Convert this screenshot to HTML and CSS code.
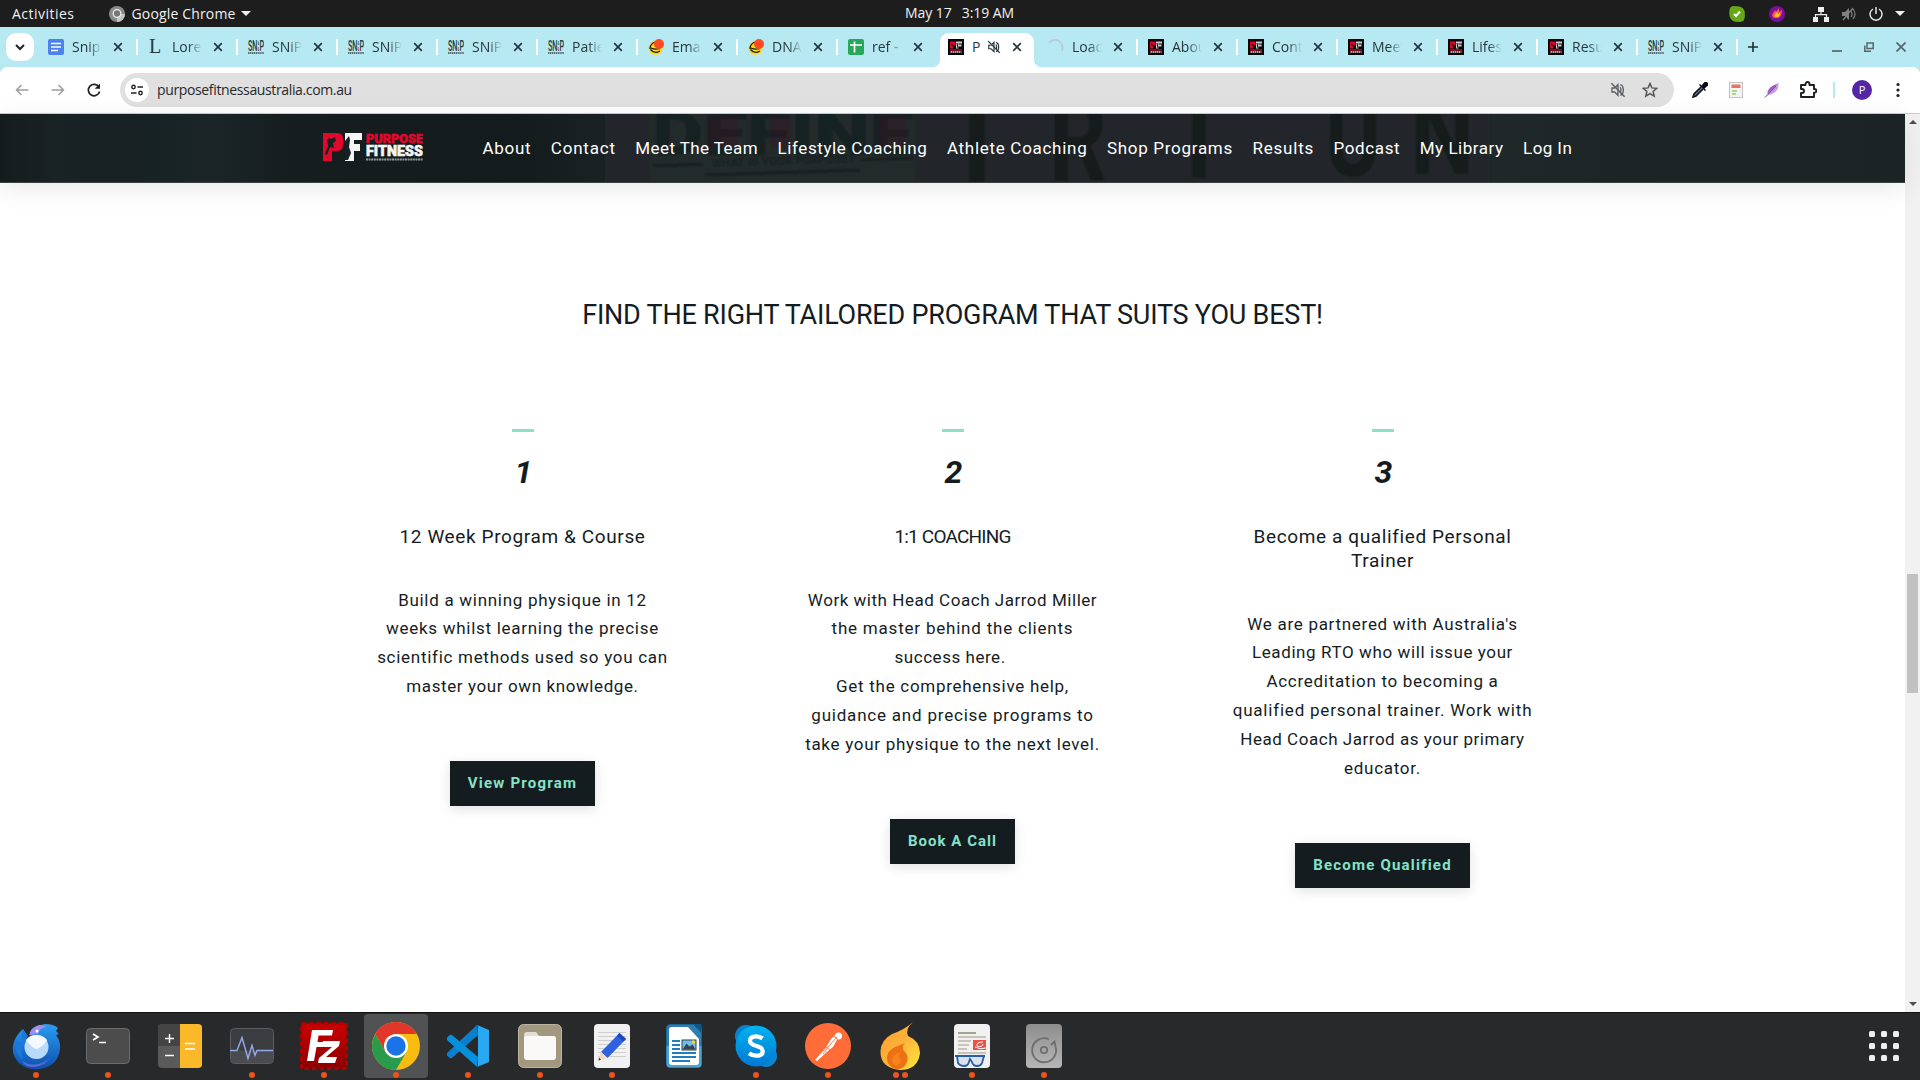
FILE: index.html
```html
<!DOCTYPE html>
<html lang="en">
<head>
<meta charset="utf-8">
<title>Purpose Fitness</title>
<link rel="stylesheet" href="styles.css">
</head>
<body>
<svg class="defs" width="0" height="0">
  <symbol id="close" viewBox="0 0 10 10"><path d="M1.2 1.2 8.8 8.8M8.8 1.2 1.2 8.8" stroke="currentColor" stroke-width="1.7" fill="none"/></symbol>
  <symbol id="snip" viewBox="0 0 16 16"><text x="0" y="11.5" font-family="Roboto" font-weight="500" font-size="14" textLength="16" lengthAdjust="spacingAndGlyphs" fill="#25383b">SN:P</text><path d="M10.3 2v3" stroke="#35b58b" stroke-width="1.2"/><path d="M10.3 8v3" stroke="#e2674a" stroke-width="1.2"/><path d="M0 14h16" stroke="#5c7175" stroke-width="1.8" stroke-dasharray="1.4 .5"/></symbol>
  <symbol id="pf" viewBox="0 0 16 16"><path d="M0 0h16v16H0z" fill="#050505"/><path d="M2 2.500h5.500v4H5v3H2z" fill="#d4082d"/><path d="M8 2.500h6v2h-3.500v1h3v2h-3v2H8z" fill="#ccc"/><path d="M3 5l3 2M9 4l1 5" stroke="#050505"/><path d="M2 11h12" stroke="#c8102e" stroke-width="1.3"/><path d="M2.500 13h11" stroke="#ddd" stroke-width="1.5" stroke-dasharray="1.500 .5"/></symbol>
  <symbol id="mail" viewBox="0 0 16 16"><circle cx="7.500" cy="9" r="7" fill="#ffd91c"/><path d="M2 10q0-5 5-7M2.500 10.500q4 5 9.500 1.500M3 9q4 2 9 .5" stroke="#1c1c1c" stroke-width="1.300" fill="none"/><circle cx="11" cy="5" r="5" fill="#ff4b1f"/></symbol>
  <symbol id="mute" viewBox="0 0 24 24"><path d="M3 9h4l5-5v16l-5-5H3zM15 8c2 2 2 6 0 8M15.500 4c6 2 6 14 0 16" fill="none" stroke="currentColor" stroke-width="2"/><path d="M2 2l20 20" stroke="currentColor" stroke-width="2.200"/></symbol>
</svg>

<header class="topbar">
  <span class="activities">Activities</span>
  <svg class="chrome-mono" viewBox="0 0 16 16"><circle cx="8" cy="8" r="8" fill="#8b8b8b"/><path d="M8 8h8a8 8 0 0 1-8 8z" fill="#c5c5c5"/><circle cx="8" cy="7.500" r="3.800" fill="#777" stroke="#eee" stroke-width="1.300"/></svg>
  <span class="appname">Google Chrome</span><i class="tri"></i>
  <div class="clock"><span>May 17</span><span>3:19 AM</span></div>
  <div class="tray">
    <svg class="skype-tray" width="16" height="16" viewBox="0 0 16 16"><path d="M4.500 0Q7 .2 9 .3 16 1 15.800 8q.8 8-5 8Q6 16 4 15 0 12 .3 7 0 0 4.500 0" fill="#64a815"/><path d="M5 8l2 2 4-4.500" stroke="#fff" stroke-width="2" fill="none"/></svg>
    <svg class="flame-tray" width="16" height="16" viewBox="0 0 16 16"><circle cx="8" cy="8" r="8" fill="#7b0fa0"/><path d="M3 9l3-5 1 2 3-4v4l3-2c0 5-2 8-5 8S4 12 3 9" fill="#ff5a36"/><path d="M5 10l3-4 1 2 2-1c0 3-1 4-3 4s-2-.5-3-1" fill="#ffc62e"/></svg>
    <svg class="net" width="16" height="16" viewBox="0 0 16 16"><path d="M5 1h6v5H5zM0 11h5v5H0zM11 11h5v5h-5z" fill="#eee"/><path d="M8 6v3M2.500 11V8.700h11V11" stroke="#eee" stroke-width="1.200" fill="none"/></svg>
    <svg class="vol" width="16" height="16" viewBox="0 0 16 16"><path d="M1 6h3l4-4v12l-4-4H1z" fill="#808080"/><path d="M10 5q2 3 0 6M12 3q4 5 0 10M2 14L12 2" stroke="#808080" fill="none" stroke-width="1.200"/></svg>
    <svg class="pow" width="14" height="16" viewBox="0 0 14 16"><path d="M4 3a6 6 0 1 0 6 0M7 1v7" stroke="#eee" stroke-width="1.400" fill="none"/></svg>
    <i class="tri"></i>
  </div>
</header>

<nav class="tabstrip">
  <button class="tabsearch"><svg width="10" height="7" viewBox="0 0 10 7"><path d="M1 1l4 4 4-4" stroke="#1f2426" stroke-width="2" fill="none"/></svg></button>
  <div class="tab"><svg class="fav" viewBox="0 0 16 16"><rect width="16" height="16" rx="2" fill="#4b82ee"/><path d="M3 4.500h10M3 8h10M3 11.500h7" stroke="#fff" stroke-width="1.500"/></svg><span>Snip</span><svg class="x"><use href="#close"/></svg></div>
  <div class="tab"><svg class="fav" viewBox="0 0 16 16"><text x="1" y="14" font-family="Liberation Serif" font-size="20" fill="#263b3f">L</text></svg><span>Lore</span><svg class="x"><use href="#close"/></svg></div>
  <div class="tab"><svg class="fav"><use href="#snip"/></svg><span>SNiP</span><svg class="x"><use href="#close"/></svg></div>
  <div class="tab"><svg class="fav"><use href="#snip"/></svg><span>SNiP</span><svg class="x"><use href="#close"/></svg></div>
  <div class="tab"><svg class="fav"><use href="#snip"/></svg><span>SNiP</span><svg class="x"><use href="#close"/></svg></div>
  <div class="tab"><svg class="fav"><use href="#snip"/></svg><span>Patie</span><svg class="x"><use href="#close"/></svg></div>
  <div class="tab"><svg class="fav"><use href="#mail"/></svg><span>Ema</span><svg class="x"><use href="#close"/></svg></div>
  <div class="tab"><svg class="fav"><use href="#mail"/></svg><span>DNA</span><svg class="x"><use href="#close"/></svg></div>
  <div class="tab nosep"><svg class="fav" viewBox="0 0 16 16"><rect width="16" height="16" rx="2" fill="#28a75b"/><path d="M2 6h12M6.500 2.500v11" stroke="#fff" stroke-width="1.700"/></svg><span>ref -</span><svg class="x"><use href="#close"/></svg></div>
  <div class="tab active nosep"><svg class="fav"><use href="#pf"/></svg><span class="short">P</span><svg class="tabmute"><use href="#mute"/></svg><svg class="x"><use href="#close"/></svg></div>
  <div class="tab"><svg class="fav" viewBox="0 0 16 16"><path d="M1 4q6-6 11-1 4 4 2 9" fill="none" stroke="#b3ccd1" stroke-width="1.600"/></svg><span>Load</span><svg class="x"><use href="#close"/></svg></div>
  <div class="tab"><svg class="fav"><use href="#pf"/></svg><span>Abou</span><svg class="x"><use href="#close"/></svg></div>
  <div class="tab"><svg class="fav"><use href="#pf"/></svg><span>Cont</span><svg class="x"><use href="#close"/></svg></div>
  <div class="tab"><svg class="fav"><use href="#pf"/></svg><span>Meet</span><svg class="x"><use href="#close"/></svg></div>
  <div class="tab"><svg class="fav"><use href="#pf"/></svg><span>Lifes</span><svg class="x"><use href="#close"/></svg></div>
  <div class="tab"><svg class="fav"><use href="#pf"/></svg><span>Resu</span><svg class="x"><use href="#close"/></svg></div>
  <div class="tab"><svg class="fav"><use href="#snip"/></svg><span>SNiP</span><svg class="x"><use href="#close"/></svg></div>
  <svg class="newtab" width="10" height="10" viewBox="0 0 10 10"><path d="M5 0v10M0 5h10" stroke="#1f2c30" stroke-width="1.600"/></svg>
  <div class="winctl">
    <svg width="10" height="10" viewBox="0 0 10 10"><path d="M0 9h10" stroke="#59656a" stroke-width="1.700"/></svg>
    <svg width="10" height="10" viewBox="0 0 10 10"><path d="M3 1h6.200v5.500H3zM.8 3.500V9.200H7" stroke="#59656a" stroke-width="1.500" fill="none"/></svg>
    <svg width="10" height="10" viewBox="0 0 10 10"><path d="M.5.500l9 9M9.500.500l-9 9" stroke="#59656a" stroke-width="1.700"/></svg>
  </div>
</nav>

<div class="toolbar">
  <svg width="14" height="12" viewBox="0 0 14 12"><path d="M13.500 6H1.500M6.500 1l-5 5 5 5" stroke="#9b9d9f" stroke-width="1.500" fill="none"/></svg>
  <svg class="fwd" width="14" height="12" viewBox="0 0 14 12"><path d="M.5 6h12M7.500 1l5 5-5 5" stroke="#9b9d9f" stroke-width="1.500" fill="none"/></svg>
  <svg class="reload" width="14" height="14" viewBox="0 0 14 14"><path d="M12 4.200A5.700 5.700 0 1 0 12.600 8.500" stroke="#1d2022" stroke-width="1.700" fill="none"/><path d="M13 .5v5.300H7.700z" fill="#1d2022"/></svg>
  <div class="omnibox">
    <span class="site"><svg width="12" height="12" viewBox="0 0 12 12"><path d="M6.500 3H12M0 9h5.500" stroke="#222" stroke-width="1.600"/><circle cx="2.500" cy="3" r="1.700" fill="none" stroke="#222" stroke-width="1.400"/><circle cx="9.500" cy="9" r="1.700" fill="none" stroke="#222" stroke-width="1.400"/></svg></span>
    <span class="url">purposefitnessaustralia.com.au</span>
    <svg class="omute"><use href="#mute"/></svg>
    <svg class="star" width="16" height="16" viewBox="0 0 16 16"><path d="M8 1.500l1.900 4.400 4.800.4-3.600 3.200 1.100 4.700L8 11.700l-4.200 2.500 1.100-4.700L1.300 6.300l4.800-.4z" fill="none" stroke="#55585a" stroke-width="1.500"/></svg>
  </div>
  <div class="exts">
    <svg width="16" height="16" viewBox="0 0 16 16"><path d="M9 5L2 12l-1 3 3-1 7-7" fill="#5c6fd0" stroke="#111" stroke-width="1.600"/><path d="M7 3l6 6 1-1-1.500-1.500L15.500 4a2 2 0 0 0-3.500-3.500L9.500 3.500 8 2z" fill="#0b0b12"/></svg>
    <svg width="16" height="16" viewBox="0 0 16 16"><rect x="1.500" y=".5" width="13" height="15" fill="#f3f3f3" stroke="#c3c3c3"/><path d="M3.500 2.500h9V6h-9z" fill="#ee7168"/><path d="M4 9h5M4 12h4" stroke="#96ce6a" stroke-width="1.500"/></svg>
    <svg width="16" height="16" viewBox="0 0 16 16"><path d="M1 15L14.500 1Q15 8 10 11q-3 2-7 2" fill="#c69be6"/><path d="M3.500 12Q2 6 14.500 1" fill="#9b57cb"/><path d="M1 15.500L12 4" stroke="#6e3b95" stroke-width="1"/></svg>
    <svg width="18" height="18" viewBox="0 0 18 18"><path d="M2 4h4.500V3a2 2 0 0 1 4 0v1H15v4h.5a1.800 1.800 0 0 1 0 3.600H15V16H2v-4h1a1.700 1.700 0 0 0 0-4H2z" fill="none" stroke="#1d2022" stroke-width="1.900" stroke-linejoin="round"/></svg>
    <i class="vline"></i>
    <span class="avatar">P</span>
    <svg width="4" height="16" viewBox="0 0 4 16"><g fill="#1d2022"><circle cx="2" cy="2.500" r="1.600"/><circle cx="2" cy="8" r="1.600"/><circle cx="2" cy="13.500" r="1.600"/></g></svg>
  </div>
</div>

<div class="viewport">
  <div class="page">
    <header class="sitehead">
      <svg class="backdrop" width="1905" height="68" viewBox="0 0 1905 68">
        <defs><filter id="soft"><feGaussianBlur stdDeviation="1"/></filter></defs>
        <g filter="url(#soft)">
          <path d="M605 -5h885v80H605z" fill="#20282a"/>
          <path d="M650 -5h265v80H650z" fill="#22292b"/>
          <text x="652" y="41" font-family="Roboto" font-weight="900" font-size="62" fill="#192022" textLength="262" lengthAdjust="spacingAndGlyphs">DEFINE</text>
          <path d="M708 2h30v32h-30zM770 2h20v32h-20zM878 2h28v32h-28z" fill="#3a1b22" opacity=".35"/>
          <path d="M653 52l50-2M705 61l155-5M861 46l52-2" stroke="#12191b" stroke-width="2"/>
          <text x="712" y="53" transform="rotate(-2 712 53)" font-family="Roboto" font-size="11" textLength="142" fill="#161d1f">WHAT IS YOUR PURPOSE?</text>
          <path d="M969-5h16v80h-16zM1192-5h14v69h-14z" fill="#151d1f"/>
          <g font-family="Roboto" font-weight="700" font-size="116" fill="#151d1f">
            <text x="1049" y="67" textLength="58" lengthAdjust="spacingAndGlyphs">R</text>
            <text x="1325" y="62" textLength="56" lengthAdjust="spacingAndGlyphs">U</text>
            <text x="1410" y="60" textLength="64" lengthAdjust="spacingAndGlyphs">N</text>
          </g>
        </g>
      </svg>
      <svg class="logo" width="100" height="28" viewBox="0 0 100 28">
        <path d="M0 0h14q6 0 6 6v6q0 6-6 6h-5v10H0z" fill="#e0082d"/>
        <path d="M22 0h17v7H31v4h6v7h-6v10h-9z" fill="#f4f4f4"/>
        <path d="M4 7q2-3 4-1l4-2 1 4-3 2 1 5-4-1-3 8-2-1 3-8zM22 8l4-5 1 4-1 7 2 6-3 7h-3z" fill="#172022"/>
        <text x="43" y="10" font-family="Roboto" font-weight="900" font-size="13" textLength="57" lengthAdjust="spacingAndGlyphs" fill="#e0082d" stroke="#e0082d" stroke-width=".6">PURPOSE</text>
        <text x="43" y="22.500" font-family="Roboto" font-weight="900" font-size="14.500" textLength="57" lengthAdjust="spacingAndGlyphs" fill="#f4f4f4" stroke="#f4f4f4" stroke-width=".6">FITNESS</text>
        <path d="M43 26.500h57" stroke="#8f9798" stroke-width="1.800" stroke-dasharray="2 .6"/>
      </svg>
      <nav class="menu">
        <a class="ls7">About</a><a class="ls8">Contact</a><a class="ls4">Meet The Team</a><a class="ls6">Lifestyle Coaching</a><a class="ls7">Athlete Coaching</a><a class="ls7">Shop Programs</a><a class="ls8">Results</a><a class="ls6">Podcast</a><a class="ls5">My Library</a><a class="ls4">Log In</a>
      </nav>
    </header>
    <main>
      <h1>FIND THE RIGHT TAILORED PROGRAM THAT SUITS YOU BEST!</h1>
      <div class="programs">
        <section>
          <i class="dash"></i><b class="num">1</b>
          <h2>12 Week Program &amp; Course</h2>
          <p><span class="ls7">Build a winning physique in 12</span><span class="ls7">weeks whilst learning the precise</span><span class="ls7">scientific methods used so you can</span><span class="ls6">master your own knowledge.</span></p>
          <a class="btn">View Program</a>
        </section>
        <section>
          <i class="dash"></i><b class="num">2</b>
          <h2 class="caps">1:1 COACHING</h2>
          <p><span class="ls5">Work with Head Coach Jarrod Miller</span><span class="ls8">the master behind the clients</span><span class="ls5">success here.&nbsp;</span><span class="ls7">Get the comprehensive help,</span><span class="ls8">guidance and precise programs to</span><span class="ls7">take your physique to the next level.</span></p>
          <a class="btn book">Book A Call</a>
        </section>
        <section>
          <i class="dash"></i><b class="num">3</b>
          <h2>Become a qualified Personal<br>Trainer</h2>
          <p><span class="ls7">We are partnered with Australia's</span><span class="ls6">Leading RTO who will issue your</span><span class="ls7">Accreditation to becoming a</span><span class="ls8">qualified personal trainer. Work with</span><span class="ls5">Head Coach Jarrod as your primary</span><span class="ls7">educator.</span></p>
          <a class="btn">Become Qualified</a>
        </section>
      </div>
    </main>
  </div>
  <div class="scrollbar"><i class="up"></i><i class="thumb"></i><i class="down"></i></div>
</div>

<footer class="dock">
  <div class="app run"><svg viewBox="0 0 48 48"><defs><linearGradient id="tb" x1="0" y1="0" x2="0" y2="1"><stop offset="0" stop-color="#2b9df0"/><stop offset="1" stop-color="#0d4fb0"/></linearGradient></defs><path d="M11 7q-7 6-9 13-4 12 5 21 9 8 21 6 18-3 20-20 1-8-4-14l3-1-3-3 2-3q-4-4-13-4-11 1-15 12l-4 3z" fill="url(#tb)"/><path d="M3 19q-1 12 8 19-3-10 0-17M11 7q-3 7 1 13l4-6z" fill="#1b79dd"/><path d="M17 13q2-8 10-10 5 0 8 2-7 0-9 7z" fill="#9c8ff0"/><path d="M10 39q12 8 27-2-7 9-18 8-7-1-9-6" fill="#8a77e0" opacity=".6"/><circle cx="24.500" cy="25" r="12" fill="#b9dafb"/><path d="M14 18q8 10 11 9 8-4 10-9-4-5-10.500-5T14 18" fill="#f4f9ff"/><circle cx="25" cy="9" r="1.500" fill="#fff"/></svg></div>
  <div class="app run"><svg viewBox="0 0 48 48"><rect x="2.500" y="6.500" width="43" height="35" rx="4" fill="#4c4c4c" stroke="#6c6c6c"/><path d="M9 12l5 3-5 3M15 20.500h7" stroke="#fff" stroke-width="1.700" fill="none"/></svg></div>
  <div class="app"><svg viewBox="0 0 48 48"><rect x="2" y="2" width="44" height="44" rx="4" fill="#5a5a5a"/><path d="M2 24V6q0-4 4-4h18v22z" fill="#444"/><path d="M24 2h18q4 0 4 4v36q0 4-4 4H24z" fill="#fbb92a"/><path d="M9 16.500h9M13.500 12v9M9 33.500h9M29 21.500h10M29 27h10" stroke="#fff" stroke-width="1.400"/></svg></div>
  <div class="app run"><svg viewBox="0 0 48 48"><rect x="2.500" y="6.500" width="43" height="35" rx="4" fill="#3b3c3f" stroke="#5c5d60"/><path d="M3 28.500h42V38q0 3-3 3H6q-3 0-3-3z" fill="#4a4b4e"/><path d="M2 28.500h7l5-13 6 21 4-13 3 10 2-5h16" stroke="#93a9ee" stroke-width="1.400" fill="none"/></svg></div>
  <div class="app run"><svg viewBox="0 0 48 48"><defs><linearGradient id="fz" x1="0" y1="0" x2="0" y2="1"><stop offset="0" stop-color="#cc0000"/><stop offset="1" stop-color="#8b0000"/></linearGradient></defs><rect x="1.500" y="1.500" width="45" height="45" fill="url(#fz)" stroke="#b00000" stroke-width="3" stroke-dasharray="4.500 3"/><path d="M12 8h21l-1 5.500H18.500L17.500 20H26l-1 5h-8.500L14 39H7z" fill="#fff"/><path d="M23 19h17l-1 5-13 11h11l-2 6H18l1-5 13-11H22z" fill="#fff"/></svg></div>
  <div class="app run current"><svg viewBox="0 0 48 48"><circle cx="24" cy="24" r="24" fill="#fbbc12"/><path d="M3.200 12A24 24 0 0 1 44.800 12H24L13.600 30z" fill="#e1372b"/><path d="M13.600 30L3.200 12Q0 18 0 24A24 24 0 0 0 24 48l10.400-18z" fill="#289c4b"/><circle cx="24" cy="24" r="12" fill="#fff"/><circle cx="24" cy="24" r="9.700" fill="#1a73e8"/></svg></div>
  <div class="app run"><svg viewBox="0 0 48 48"><path d="M34 13L8 36l-2 .3-3-3V31L33 3z" fill="#0a7fce"/><path d="M34 35L8 13l-2-.2-3 3V18l30 27z" fill="#0690dc"/><path d="M33 3l12 5v32l-12 5q1-.5 1-3V6q0-2-1-3" fill="#29a9f2"/></svg></div>
  <div class="app run"><svg viewBox="0 0 48 48"><rect x="2.500" y="2.500" width="43" height="43" rx="5" fill="#a1987f" stroke="#bcb49e"/><path d="M8 16v-3q0-3 3-3h9l3 4h14q3 0 3 3z" fill="#e4dfd3"/><rect x="8" y="14" width="32" height="24" rx="3" fill="#faf9f7"/></svg></div>
  <div class="app run"><svg viewBox="0 0 48 48"><rect x="6" y="2" width="36" height="44" rx="4" fill="#f1f1f1"/><path d="M10 10.500h28M10 14.500h28M10 18.500h28M10 22.500h28M10 26.500h28M10 30.500h28M10 34.500h28" stroke="#cfcfcf"/><path d="M13 30L31.500 11l6.500 6-18.500 19z" fill="#2f61e0"/><path d="M29 13.500L31.500 11l6.500 6-2.500 2.500z" fill="#1f46b8"/><path d="M13 30l6.500 6L10.500 38.500z" fill="#f8d8b6"/><path d="M11 35.500l2 2.300-2.500.7z" fill="#333"/></svg></div>
  <div class="app"><svg viewBox="0 0 48 48"><rect x="6.500" y="2.500" width="35" height="43" rx="4" fill="#2b7eaf" stroke="#1c6491"/><path d="M6.500 24h35v18q0 3.500-3.500 3.500H10q-3.500 0-3.500-3.500z" fill="#4aa5d3"/><path d="M12 5h16l11 12v23q0 3-3 3H12q-3 0-3-3V8q0-3 3-3" fill="#fff"/><path d="M33 2h8.500v9z" fill="#0e5686"/><path d="M12 19h8M12 23h8M12 27h8M12 31h24M12 35h24M12 39h18" stroke="#1f7fb8" stroke-width="1.900"/><rect x="22" y="18" width="14" height="10" fill="#6ec0ec" stroke="#2f4451"/><path d="M22.500 27.500l4-6 3 3 3-2 3 5z" fill="#37474f"/><circle cx="33.500" cy="20" r="1.800" fill="#fc3"/></svg></div>
  <div class="app run"><svg viewBox="0 0 48 48"><defs><linearGradient id="sk" x1="0" y1="0" x2="0" y2="1"><stop offset="0" stop-color="#00b4f0"/><stop offset="1" stop-color="#0078d4"/></linearGradient></defs><circle cx="14" cy="14" r="11" fill="#0783cb"/><circle cx="34" cy="34" r="11" fill="#0a86d0"/><circle cx="24" cy="24" r="20.500" fill="url(#sk)"/><path d="M30.500 16.500q-3-2.300-6.500-2.200-6 .2-6 4.500 0 3.500 6.500 5.200 6.200 1.600 6.200 5.200 0 4.300-6.400 4.500-4 .1-7.300-2.400" stroke="#fff" stroke-width="4.300" fill="none"/></svg></div>
  <div class="app run"><svg viewBox="0 0 48 48"><circle cx="24" cy="24" r="23" fill="#ff6c37"/><path d="M27 17l4-4 3 3-5 9-5 4-11 10-2-1 10-11z" fill="#fff"/><circle cx="34.500" cy="14" r="3.500" fill="#fff"/><path d="M33 15l-9 10-5 7M30 14l4 4M22 25l4 3" stroke="#ff6c37" stroke-width=".9" fill="none"/></svg></div>
  <div class="app run twice"><svg viewBox="0 0 48 48"><defs><linearGradient id="fl" x1="0" y1="0" x2="1" y2="1"><stop offset="0" stop-color="#ff9b26"/><stop offset=".5" stop-color="#fdb33b"/><stop offset="1" stop-color="#ffe93a"/></linearGradient></defs><path d="M37 0q-8 7-5 14 12 5 12 17-2 17-20 17Q4 46 4.500 29 5 18 16 12 28 8 37 0" fill="url(#fl)"/><path d="M29 21q-4 4-1 8 5 4 3 11-3 8-11 7-9-2-9-11 0-7 8-11 6-2 10-4" fill="#ee6f14"/><path d="M25 30q-3 3-1 6 2 5-2 7-5 1-6-4 0-5 4-7z" fill="#f4841c"/></svg></div>
  <div class="app run"><svg viewBox="0 0 48 48"><rect x="6" y="2" width="36" height="44" rx="4" fill="#f1f1f1"/><path d="M10 11h18" stroke="#a7a192" stroke-width="2"/><path d="M10 15h28M10 19h13M10 23h11M10 27h9M10 31h28" stroke="#c8c4b9" stroke-width="2"/><rect x="25" y="18" width="13" height="10" fill="#ef4f45"/><path d="M35 20q-7 0-6 4 5 2 6-2M27 25q5 3 11 1" stroke="#fff" fill="none"/><path d="M7 34h30M9 34l1 7q2 3 6 3t5-4l1-3 2 3q1 4 5 4t5-3l2-7" stroke="#285ca8" stroke-width="1.800" fill="#dbe2ea"/></svg></div>
  <div class="app run"><svg viewBox="0 0 48 48"><defs><linearGradient id="dk" x1="0" y1="0" x2="0" y2="1"><stop offset="0" stop-color="#8e8e8e"/><stop offset="1" stop-color="#b6b6b6"/></linearGradient></defs><rect x="6" y="2" width="36" height="44" rx="4" fill="url(#dk)"/><path d="M29 17.300A12 12 0 1 0 35.500 24.500L34.500 19.500L31 23" stroke="#6e6e6e" stroke-width="1.800" fill="none"/><circle cx="24" cy="28" r="3.200" fill="none" stroke="#6e6e6e" stroke-width="1.800"/></svg></div>
  <svg class="grid" width="30" height="30" viewBox="0 0 30 30"><g fill="#eee"><rect width="6" height="6" rx="1.500"/><rect x="12" width="6" height="6" rx="1.500"/><rect x="24" width="6" height="6" rx="1.500"/><rect y="12" width="6" height="6" rx="1.500"/><rect x="12" y="12" width="6" height="6" rx="1.500"/><rect x="24" y="12" width="6" height="6" rx="1.500"/><rect y="24" width="6" height="6" rx="1.500"/><rect x="12" y="24" width="6" height="6" rx="1.500"/><rect x="24" y="24" width="6" height="6" rx="1.500"/></g></svg>
</footer>
</body>
</html>
```
FILE: styles.css
```css
* { box-sizing: border-box; }
body {
  margin: 0;
  width: 1920px;
  height: 1080px;
  overflow: hidden;
  display: flex;
  flex-direction: column;
  font-family: "Open Sans", "Noto Sans", sans-serif;
  background: #fff;
}
svg { display: block; flex: none; }
.defs { position: absolute; }

/* desktop bar */
.topbar {
  height: 27px;
  flex: none;
  display: flex;
  align-items: center;
  padding-left: 12px;
  background: #1d1d1d;
  color: #f0f0f0;
  font-size: 14px;
  line-height: 26px;
  position: relative;
}
.activities { letter-spacing: .48px; }
.chrome-mono { width: 16px; height: 16px; margin-left: 35px; }
.appname { margin-left: 6px; letter-spacing: .16px; }
.tri { width: 0; height: 0; border: 5px solid transparent; border-top-color: #f0f0f0; border-bottom: 0; margin-left: 5px; }
.clock { position: absolute; left: 905px; top: 0; display: flex; gap: 10px; letter-spacing: -.05px; }
.tray { display: flex; align-items: center; margin-left: auto; margin-right: 15px; }
.skype-tray { margin-right: 24px; }
.net { margin-left: 28px; }
.vol { margin-left: 12px; }
.pow { margin-left: 12px; }
.tray .tri { margin-left: 12px; }

/* browser tabs */
.tabstrip {
  height: 40px;
  flex: none;
  display: flex;
  padding-left: 6px;
  background: #b6e9f1;
  align-items: center;
}
.tabsearch { width: 28px; height: 28px; margin-right: 4px; padding: 0; border: 0; border-radius: 10px; background: #fff; display: grid; place-items: center; }
.tab { width: 100px; height: 40px; flex: none; display: flex; align-items: center; padding-left: 10px; position: relative; z-index: 0; font-size: 14px; color: #27373b; }
.fav { width: 16px; height: 16px; }
.tab span { width: 30px; margin: 0 12px 1px 8px; overflow: hidden; white-space: nowrap; -webkit-mask-image: linear-gradient(90deg, #000 55%, transparent); mask-image: linear-gradient(90deg, #000 55%, transparent); }
.x { width: 10px; height: 10px; color: #26363a; margin-left: -1px; }
.tab::after { content: ""; width: 2px; height: 16px; margin-left: auto; background: #fff; }
.nosep::after { display: none; }
.tab.active::before {
  content: "";
  position: absolute;
  z-index: -1;
  left: -6px;
  top: 6px;
  width: 110px;
  height: 34px;
  background:
    radial-gradient(circle at 0 0, transparent 8px, #fff 8.5px) 0 100% / 8px 8px no-repeat,
    radial-gradient(circle at 100% 0, transparent 8px, #fff 8.5px) 100% 100% / 8px 8px no-repeat,
    linear-gradient(#fff, #fff) 8px 10px / 94px 24px no-repeat,
    linear-gradient(#fff, #fff) 18px 0 / 74px 12px no-repeat,
    radial-gradient(circle at 18px 10px, #fff 10px, transparent 10.5px) 0 0 / 50% 10px no-repeat,
    radial-gradient(circle at 37px 10px, #fff 10px, transparent 10.5px) 100% 0 / 50% 10px no-repeat;
}
.tab .short { width: 10px; margin-right: 6px; -webkit-mask-image: none; mask-image: none; }
.tabmute { width: 14px; height: 14px; margin-right: 12px; margin-left: -1px; color: #27373b; }
.newtab { margin-left: 10px; }
.winctl { margin-left: auto; display: flex; gap: 22px; padding-right: 14px; }

/* toolbar */
.toolbar {
  height: 47px;
  flex: none;
  display: flex;
  align-items: center;
  padding-left: 15px;
  border-bottom: 1px solid #c5cfcc;
  background:
    radial-gradient(circle at 8px 8px, #fff 8px, #b6e9f1 8.5px) 0 0 / 8px 8px no-repeat,
    radial-gradient(circle at 0 8px, #fff 8px, #b6e9f1 8.5px) 100% 0 / 8px 8px no-repeat,
    #fff;
}
.fwd { margin-left: 22px; }
.reload { margin-left: 22px; }
.omnibox { width: 1554px; height: 34px; margin-left: 19px; border-radius: 17px; background: #e0e0e0; display: flex; align-items: center; padding: 0 16px 0 5px; }
.site { width: 24px; height: 24px; border-radius: 50%; background: #fff; display: grid; place-items: center; }
.url { margin: 0 0 2px 8px; font-size: 14px; letter-spacing: -.36px; color: #27292b; }
.omute { width: 16px; height: 16px; margin-left: auto; margin-right: 16px; color: #5c5f61; }
.exts { display: flex; align-items: center; margin-left: 18px; }
.exts > * { margin-right: 20px; }
.exts > :nth-child(3) { margin-right: 19px; }
.exts > :nth-child(4) { margin-right: 16px; }
.exts .vline { width: 2px; height: 16px; background: #b6e9f1; margin-right: 17px; }
.avatar { width: 20px; height: 20px; border-radius: 50%; background: #5426a5; color: #fff; font-size: 11px; line-height: 20px; text-align: center; }
.exts .avatar { margin-right: 24px; }

/* page */
.viewport { height: 898px; flex: none; display: flex; }
.page { width: 1905px; font-family: Roboto, sans-serif; color: #141c1f; }
.sitehead {
  height: 69px;
  display: flex;
  align-items: center;
  padding-left: 323px;
  position: relative;
  background: linear-gradient(90deg, #141c1e 0, #192224 60px, #172022 90px, #182325 170px, #1b2527 210px, #151d1f 290px, #131b1d 520px, #192123 600px, #20282a 1480px, #1c2426 1620px, #1b2325);
  border-bottom: 1px solid #37413f;
  box-shadow: 0 6px 26px rgba(0, 0, 0, .09);
}
.backdrop { position: absolute; left: 0; top: 0; }
.logo { position: relative; top: -1px; }
.menu { position: relative; display: flex; margin-left: 59.5px; gap: 19.5px; font-size: 17px; line-height: 24px; color: #fff; white-space: nowrap; }
.ls4 { letter-spacing: .42px; }
.ls5 { letter-spacing: .53px; }
.ls6 { letter-spacing: .6px; }
.ls7 { letter-spacing: .71px; }
.ls8 { letter-spacing: .79px; }

main { padding-top: 115px; }
h1 { margin: 0 0 97px; font-size: 27px; font-weight: 400; line-height: 34px; letter-spacing: -.22px; text-align: center; }
.programs { width: 1290px; margin: 0 auto; display: grid; grid-template-columns: repeat(3, 430px); }
section { display: flex; flex-direction: column; align-items: center; text-align: center; }
.dash { width: 22px; height: 3px; background: #8be0ca; }
.num { margin: 21px 0 0 2px; font-size: 32px; line-height: 38px; font-style: italic; font-weight: 700; }
h2 { margin: 34px 0 36.600px; font-size: 19px; line-height: 24px; font-weight: 400; letter-spacing: .62px; }
h2.caps { letter-spacing: -.8px; }
p { margin: 0 0 60.700px; font-size: 17px; line-height: 28.8px; }
p span { display: block; white-space: nowrap; }
.btn { height: 44.500px; padding: 0 18px; background: #141c1f; color: #86e2c7; font-size: 15px; font-weight: 700; line-height: 44px; letter-spacing: 1.2px; box-shadow: 0 3px 12px rgba(0, 0, 0, .12); }
.book { letter-spacing: 1.02px; }

.scrollbar { width: 15px; background: #f1f1f1; display: flex; flex-direction: column; align-items: center; padding: 6px 0; }
.up { width: 0; height: 0; border: 4px solid transparent; border-top: 0; border-bottom-color: #4d4d4d; }
.thumb { width: 11px; height: 119px; margin-top: 450px; background: #c1c1c1; }
.down { width: 0; height: 0; border: 4px solid transparent; border-bottom: 0; border-top-color: #4d4d4d; margin-top: auto; }

/* dock */
.dock { height: 68px; flex: none; display: flex; background: #28292b; border-top: 1px solid #111; }
.app { width: 64px; height: 64px; margin: 1px 8px 0 0; border-radius: 4px; padding: 8px; position: relative; flex: none; }
.dock .app:first-child { margin-left: 4px; }
.app svg { width: 48px; height: 48px; }
.current { background: #515254; }
.run::after { content: ""; position: absolute; left: 29px; bottom: 0; width: 6px; height: 6px; border-radius: 50%; background: #e95420; }
.twice::after { left: 24.500px; box-shadow: 9px 0 #e95420; }
.grid { margin: 18px 21px 0 auto; }
```
